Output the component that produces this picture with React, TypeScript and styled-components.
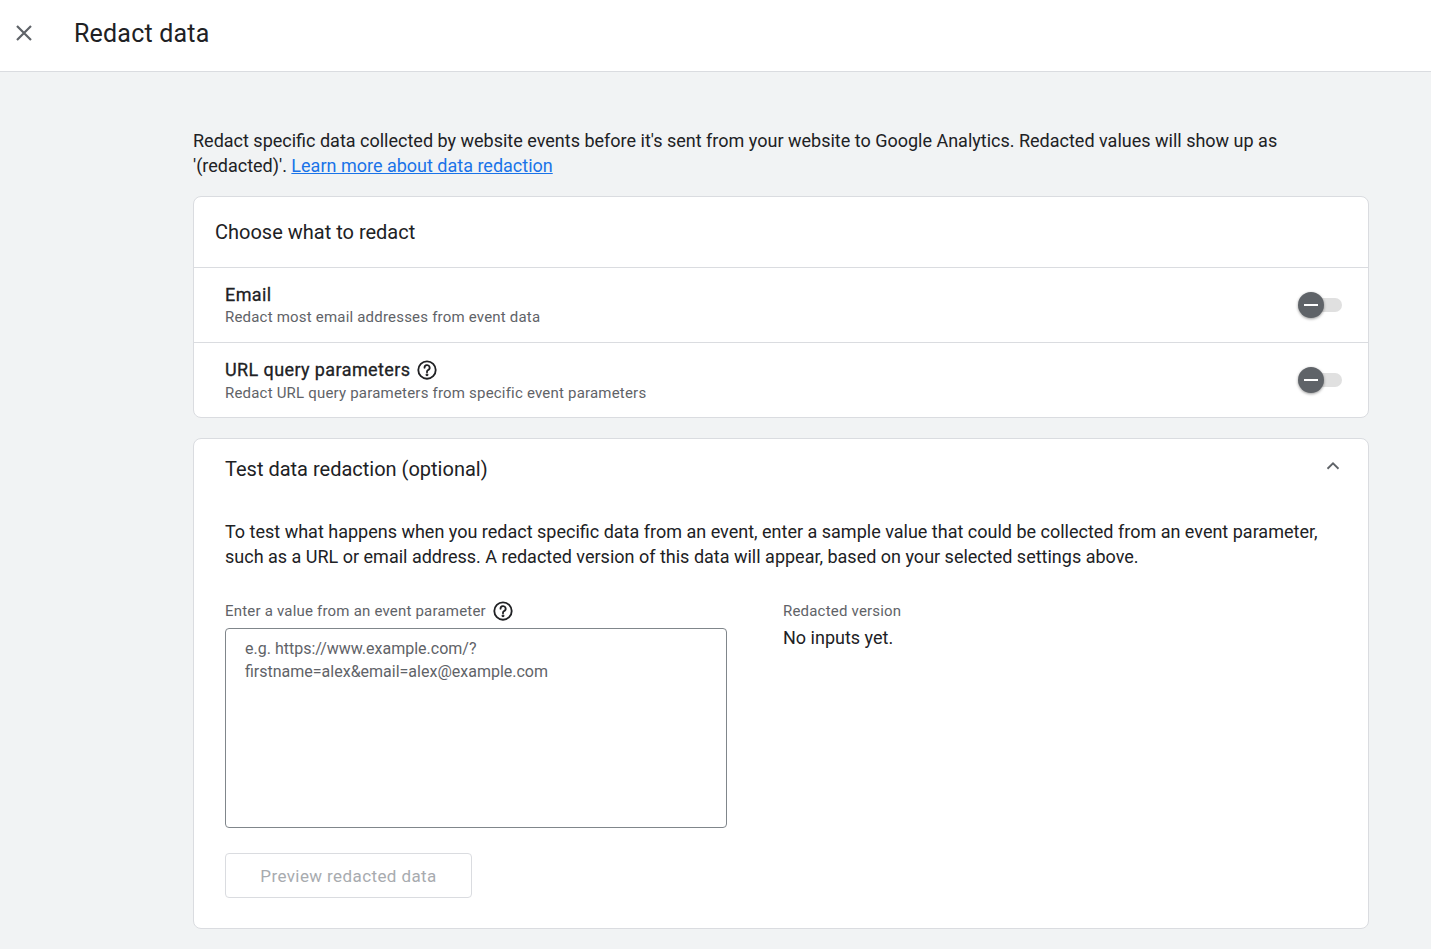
import styled, { createGlobalStyle } from "styled-components";

const Global = createGlobalStyle`
  body { margin: 0; background: #f1f3f4; font-family: Roboto, "Liberation Sans", sans-serif; color: #202124; }
`;

const Header = styled.div`
  height: 72px; background: #fff; border-bottom: 1px solid #dadce0;
  display: flex; align-items: center; padding: 0 0 5px 12px; box-sizing: border-box; gap: 38px;
`;
const Title = styled.h1`
  margin: 0; font-size: 25px; font-weight: 400; color: #202124; letter-spacing: 0.2px;
`;
const Main = styled.div`
  padding: 56px 62px 20px 193px; display: flex; flex-direction: column; gap: 20px;
`;
const Intro = styled.p`
  margin: 0 0 -2px; font-size: 18px; line-height: 25px;
  a { color: #1a73e8; }
`;
const Card = styled.div`
  background: #fff; border: 1px solid #dadce0; border-radius: 8px;
`;
const CardHead = styled.div`
  height: 70px; display: flex; align-items: center; padding-left: 21px;
  border-bottom: 1px solid #dadce0; font-size: 20px;
`;
const Row = styled.div<{ $last?: boolean }>`
  height: 74px; display: flex; align-items: center; justify-content: space-between;
  padding: 0 26px 0 31px; border-bottom: ${p => (p.$last ? "none" : "1px solid #dadce0")};
`;
const RowTitle = styled.div`
  font-size: 18px; font-weight: 400; display: flex; align-items: center; gap: 6px; letter-spacing: 0.4px;
  -webkit-text-stroke: 0.3px #202124;
`;
const RowSub = styled.div`
  font-size: 15px; color: #5f6368; margin-top: 3px; letter-spacing: 0.2px;
`;
const Toggle = styled.div`
  position: relative; width: 44px; height: 20px;
  &::before { content: ""; position: absolute; left: 8px; top: 3px; width: 36px; height: 14px; border-radius: 7px; background: #e0e0e0; }
`;
const Knob = styled.div`
  position: absolute; left: 0; top: -3px; width: 26px; height: 26px; border-radius: 50%;
  background: #5f6368; box-shadow: 0 1px 3px rgba(0,0,0,.4);
  display: flex; align-items: center; justify-content: center;
  &::after { content: ""; width: 14px; height: 2px; background: #fff; }
`;
const Section = styled.div`
  padding: 17px 24px 30px 31px;
`;
const SecHead = styled.div`
  display: flex; justify-content: space-between; align-items: center; font-size: 20px; height: 26px;
  svg { margin-top: -6px; }
`;
const Para = styled.p`
  margin: 37px 0 31px; font-size: 18px; line-height: 25px;
`;
const Cols = styled.div`
  display: flex; gap: 56px;
`;
const Col = styled.div`
  display: flex; flex-direction: column;
`;
const Label = styled.div`
  font-size: 15px; color: #5f6368; display: flex; align-items: center; gap: 6px; height: 22px; letter-spacing: 0.2px;
`;
const Area = styled.textarea`
  margin-top: 6px; width: 502px; height: 200px; box-sizing: border-box; resize: none;
  border: 1px solid #80868b; border-radius: 4px; padding: 8px 19px;
  font: 16px/23px Roboto, sans-serif; color: #202124;
  &::placeholder { color: #5f6368; }
`;
const Value = styled.div`
  margin-top: 5px; font-size: 18px;
`;
const Btn = styled.button`
  margin-top: 25px; width: 247px; height: 45px; background: #fff; border: 1px solid #dadce0;
  border-radius: 4px; font: 400 17px Roboto, sans-serif; color: #a8abaf; letter-spacing: 0.4px;
`;

const Help = () => (
  <svg width="22" height="22" viewBox="0 0 24 24" fill="none" stroke="#202124" strokeWidth="2">
    <circle cx="12" cy="12" r="9.5" />
    <path d="M9.3 9.5a2.8 2.8 0 1 1 3.8 2.6c-.7.3-1.1.9-1.1 1.7v.6" strokeLinecap="round" />
    <circle cx="12" cy="17.3" r="0.6" fill="#202124" />
  </svg>
);

export default function App() {
  return (
    <>
      <Global />
      <Header>
        <svg width="24" height="24" viewBox="0 0 24 24" stroke="#5f6368" strokeWidth="2.2"><path d="M5 5l14 14M19 5L5 19" /></svg>
        <Title>Redact data</Title>
      </Header>
      <Main>
        <Intro>
          Redact specific data collected by website events before it's sent from your website to Google Analytics. Redacted values will show up as '(redacted)'. <a href="#">Learn more about data redaction</a>
        </Intro>
        <Card>
          <CardHead>Choose what to redact</CardHead>
          <Row>
            <div><RowTitle>Email</RowTitle><RowSub>Redact most email addresses from event data</RowSub></div>
            <Toggle><Knob /></Toggle>
          </Row>
          <Row $last>
            <div><RowTitle>URL query parameters <Help /></RowTitle><RowSub>Redact URL query parameters from specific event parameters</RowSub></div>
            <Toggle><Knob /></Toggle>
          </Row>
        </Card>
        <Card>
          <Section>
            <SecHead>
              Test data redaction (optional)
              <svg width="22" height="22" viewBox="0 0 24 24" fill="none" stroke="#5f6368" strokeWidth="2"><path d="M6 15l6-6 6 6" /></svg>
            </SecHead>
            <Para>To test what happens when you redact specific data from an event, enter a sample value that could be collected from an event parameter, such as a URL or email address. A redacted version of this data will appear, based on your selected settings above.</Para>
            <Cols>
              <Col>
                <Label>Enter a value from an event parameter <Help /></Label>
                <Area placeholder={"e.g. https://www.example.com/?\nfirstname=alex&email=alex@example.com"} />
              </Col>
              <Col>
                <Label>Redacted version</Label>
                <Value>No inputs yet.</Value>
              </Col>
            </Cols>
            <Btn>Preview redacted data</Btn>
          </Section>
        </Card>
      </Main>
    </>
  );
}
